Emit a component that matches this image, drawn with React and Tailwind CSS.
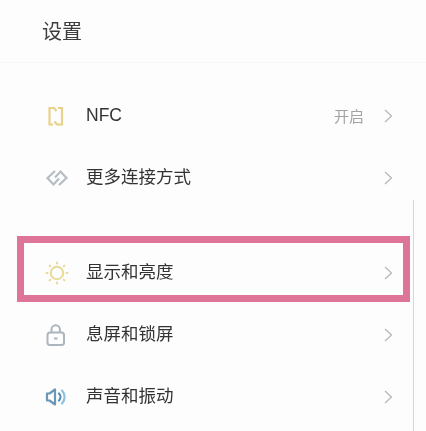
import React from "react";

const NfcIcon = () => (
  <svg width="22" height="22" viewBox="0 0 22 22" fill="none" stroke="#e6d28b" strokeWidth="2.2">
    <path d="M8 19.5H4.5V3H9l2.5 3" />
    <path d="M13 3h4v16.5h-5l-2.5-3" />
  </svg>
);

const LinkIcon = () => (
  <svg width="24" height="22" viewBox="0 0 24 22" fill="none" stroke="#b5bcc3" strokeWidth="2.2">
    <path d="M10 4 2.5 11l6 6.5 5.5-6" />
    <path d="M14 18l7.5-7-6-6.5-5.5 6" />
  </svg>
);

const SunIcon = () => (
  <svg width="24" height="24" viewBox="0 0 24 24" fill="none" stroke="#e8da96" strokeWidth="2" strokeLinecap="round">
    <circle cx="12" cy="12" r="6.2" />
    <path d="M12 1.5v1M12 21.5v1M1.5 12h1M21.5 12h1M4.6 4.6l.6.6M18.8 18.8l.6.6M4.6 19.4l.6-.6M18.8 5.2l.6-.6" />
  </svg>
);

const LockIcon = () => (
  <svg width="22" height="24" viewBox="0 0 22 24" fill="none" stroke="#adb5be" strokeWidth="2">
    <rect x="2.5" y="9.5" width="16.5" height="12.5" rx="2.5" />
    <path d="M6.5 9.5V6.5a4.2 4.2 0 0 1 8.4 0v3" />
    <path d="M9 15.5h3.5" />
  </svg>
);

const SoundIcon = () => (
  <svg width="24" height="22" viewBox="0 0 24 22" fill="none" strokeWidth="2.2">
    <path d="M2 7.5h2.5l5.5-4v15l-5.5-4H2z" stroke="#6b97b6" strokeLinejoin="round" />
    <path d="M14 7.5a5 5 0 0 1 0 7" stroke="#4f8fbe" strokeLinecap="round" />
    <path d="M17 4.5a9.5 9.5 0 0 1 0 13" stroke="#8cc0dc" strokeLinecap="round" />
  </svg>
);

const Row = ({ icon, label, value }) => (
  <div className="flex h-[62px] items-center pl-[45px] pr-[33px]">
    <div className="flex w-[41px] items-center">{icon}</div>
    <span className="text-[17.5px] leading-none text-[#333333]">{label}</span>
    <div className="ml-auto flex items-center gap-5">
      {value && <span className="text-[15px] leading-none text-[#a3a3a3]">{value}</span>}
      <svg width="9" height="14" viewBox="0 0 9 14" fill="none" stroke="#b8b8b8" strokeWidth="1.3">
        <path d="M1 1l6.5 6L1 13" />
      </svg>
    </div>
  </div>
);

export default function App() {
  return (
    <div
      className="relative h-[431px] w-[426px] overflow-hidden bg-[#fdfdfd] blur-[0.4px]"
      style={{ fontFamily: '"Liberation Sans", "Noto Sans CJK SC", sans-serif' }}
    >
      <div className="flex h-[63px] items-center border-b border-[#f8f8f8] pl-[42px] pt-0.5 text-[20px] text-[#3d3d3d]">
        设置
      </div>
      <div className="pt-[22px]">
        <Row icon={<NfcIcon />} label="NFC" value="开启" />
        <Row icon={<LinkIcon />} label="更多连接方式" />
      </div>
      <div className="pt-[33px]">
        <Row icon={<SunIcon />} label="显示和亮度" />
        <Row icon={<LockIcon />} label="息屏和锁屏" />
        <Row icon={<SoundIcon />} label="声音和振动" />
      </div>
      {/* pink highlight over the display row */}
      <div className="absolute left-[17px] top-[236px] h-[66px] w-[393px] border-[7px] border-[#de7598]" />
      {/* scrollbar line */}
      <div className="absolute left-[413px] top-[200px] h-[231px] w-px bg-[#d4d8dc]" />
    </div>
  );
}
